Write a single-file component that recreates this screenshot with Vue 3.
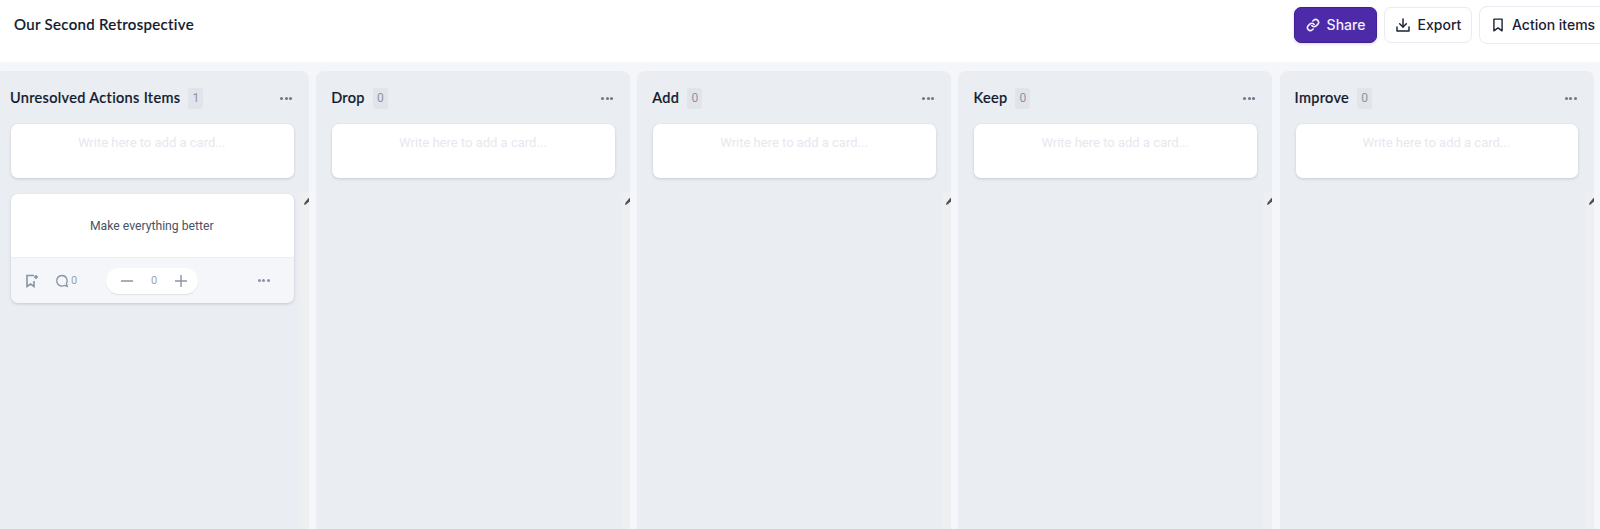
<script setup>
const columns = [
  { name: 'Unresolved Actions Items', count: 1, cards: ['Make everything better'] },
  { name: 'Drop', count: 0, cards: [] },
  { name: 'Add', count: 0, cards: [] },
  { name: 'Keep', count: 0, cards: [] },
  { name: 'Improve', count: 0, cards: [] },
]
</script>

<template>
  <div class="page">
    <header class="topbar">
      <h1 class="title">Our Second Retrospective</h1>
      <div class="actions">
        <button class="btn primary">
          <svg width="14" height="14" viewBox="0 0 24 24" fill="none" stroke="currentColor" stroke-width="2.8" stroke-linecap="round" stroke-linejoin="round"><path d="M10 13a5 5 0 0 0 7.5.5l3-3a5 5 0 0 0-7-7l-1.7 1.7" /><path d="M14 11a5 5 0 0 0-7.5-.5l-3 3a5 5 0 0 0 7 7l1.7-1.7" /></svg>
          Share
        </button>
        <button class="btn export">
          <svg width="16" height="16" viewBox="0 0 24 24" fill="none" stroke="currentColor" stroke-width="2.2" stroke-linecap="round" stroke-linejoin="round"><path d="M3 15v6h18v-6" /><path d="M12 3v12" /><path d="M7 10l5 5 5-5" /></svg>
          Export
        </button>
        <button class="btn items">
          <svg width="14" height="16" viewBox="0 0 24 24" fill="none" stroke="currentColor" stroke-width="2.4" stroke-linejoin="round"><path d="M5 2h14v20l-7-5-7 5z" /></svg>
          Action items
        </button>
      </div>
    </header>
    <main class="board">
      <section v-for="col in columns" :key="col.name" class="column">
        <div class="col-head">
          <span class="col-name">{{ col.name }}</span>
          <span class="col-count">{{ col.count }}</span>
          <span class="dots dark"><i></i><i></i><i></i></span>
        </div>
        <div class="composer">Write here to add a card...</div>
        <article v-for="card in col.cards" :key="card" class="card">
          <div class="card-text">{{ card }}</div>
          <div class="card-foot">
            <svg class="ic-flag" width="14" height="14" viewBox="0 0 14 14" fill="none" stroke="#8a94a6" stroke-width="1.6"><path d="M9 1.5H2v11l3.5-2.5L9 12.5V7" /><path d="M11 1v4M9 3h4" /></svg>
            <svg class="ic-comment" width="14" height="14" viewBox="0 0 14 14" fill="none" stroke="#8a94a6" stroke-width="1.4"><path d="M7 1.5a5.3 5.3 0 1 0 2.6 9.9l2.6.9-.8-2.7A5.3 5.3 0 0 0 7 1.5z" /></svg>
            <span class="comment-count">0</span>
            <div class="vote">
              <svg width="14" height="14" viewBox="0 0 14 14" stroke="#8a94a6" stroke-width="1.4"><path d="M1 7h12" /></svg>
              <span class="vote-num">0</span>
              <svg width="14" height="14" viewBox="0 0 14 14" stroke="#8a94a6" stroke-width="1.4"><path d="M1 7h12M7 1v12" /></svg>
            </div>
            <span class="dots"><i></i><i></i><i></i></span>
          </div>
        </article>
        <div class="resize">
          <svg width="7" height="8" viewBox="0 0 7 8"><path d="M0 8l.6-2.2L4.6.8 6.6 2.6 2 7.2z" fill="#4f4f4f" /></svg>
        </div>
      </section>
    </main>
  </div>
</template>

<style>
html, body { margin: 0; overflow: hidden; background: #f5f6fa; }
</style>

<style scoped>
.page { width: 1600px; height: 529px; overflow: hidden; display: flex; flex-direction: column; background: #f5f6fa; }
.topbar { height: 62px; flex: none; background: #fff; display: flex; align-items: flex-start; justify-content: space-between; box-sizing: border-box; padding-left: 14px; }
.title { margin: 14px 0 0; font: 500 15px/20px Lato, sans-serif; color: #10192e; letter-spacing: .32px; -webkit-text-stroke: .2px #10192e; }
.actions { display: flex; align-items: flex-start; margin-top: 6px; margin-right: -13px; }
.btn { display: flex; align-items: center; gap: 7px; box-sizing: border-box; border-radius: 7px; border: 1px solid #e9ebf2; background: #fff; color: #1a2233; font: 500 14px/18px Inter, sans-serif; padding: 0; cursor: pointer; }
.primary { width: 83px; height: 36px; margin-top: 1px; background: #4d2aa8; border-color: #3f2191; color: #f2eefc; justify-content: center; box-shadow: 0 1px 3px rgba(77,42,168,.2); }
.export { width: 88px; height: 36px; margin-top: 1px; margin-left: 7px; justify-content: center; }
.items { width: 134px; height: 38px; margin-left: 7px; padding-left: 11px; border-radius: 8px; }
.board { flex: 1; display: flex; gap: 7.15px; margin-top: 9px; margin-left: -5px; min-height: 0; }
.column { position: relative; flex: none; width: 314px; box-sizing: border-box; background: #eaedf1; border-radius: 8px 8px 0 0; padding: 0 16px 0 16px; overflow: hidden; }
.col-head { height: 53px; display: flex; align-items: center; padding-top: 1px; box-sizing: border-box; }
.col-name { font: 500 14.5px/20px Lato, sans-serif; color: #10192e; letter-spacing: .33px; margin-left: -1px; -webkit-text-stroke: .2px #10192e; }
.col-count { margin-left: 8px; min-width: 15px; height: 21px; border-radius: 3px; background: #e1e4e9; color: #8a94a6; font: 400 12px/21px Roboto, sans-serif; text-align: center; }
.dots { display: flex; gap: 1.5px; margin-left: auto; }
.dots i { width: 3px; height: 3px; border-radius: 50%; background: #8a94a6; }
.dots.dark { margin-right: 1px; }
.dots.dark i { background: #6f788a; }
.composer { height: 54px; margin-right: -.5px; padding-right: 1px; box-sizing: border-box; background: #fff; border-radius: 7px; box-shadow: 0 1px 3px rgba(60,70,100,.2); padding-top: 9px; text-align: center; font: 400 13px/20px Roboto, sans-serif; color: #e6e8ef; }
.card { margin-top: 16px; margin-right: -.5px; background: #f5f6fa; border-radius: 7px; box-shadow: 0 1px 3px rgba(60,70,100,.22); overflow: hidden; }
.card-text { height: 64px; padding-right: 1px; background: #fff; border-bottom: 1px solid #eceef3; box-sizing: border-box; text-align: center; font: 400 12.2px/64px Roboto, sans-serif; color: #4a5365; }
.card-foot { height: 45px; display: flex; align-items: center; padding: 0 24px 0 14px; }
.ic-comment { margin-left: 16px; }
.comment-count { margin-left: 2px; font: 400 11px/14px Roboto, sans-serif; color: #9aa3b3; }
.vote { margin-left: 29px; width: 92px; height: 26px; border-radius: 13px; background: #fff; box-shadow: 0 1px 1px rgba(60,70,100,.12); display: flex; align-items: center; justify-content: center; gap: 17px; padding-left: 4px; box-sizing: border-box; }
.vote-num { font: 400 11px/14px Roboto, sans-serif; color: #9aa3b3; }
.resize { position: absolute; right: 0; top: 122px; bottom: 0; width: 9px; background: #eeeff1; }
.resize svg { display: block; margin: 4px 0 0 4px; }
</style>
